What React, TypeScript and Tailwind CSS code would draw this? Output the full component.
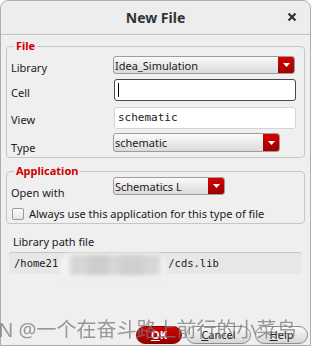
import React from "react";

const sans = { fontFamily: '"Noto Sans", "Open Sans", sans-serif' };

function Combo({ text, w }: { text: string; w: string }) {
  return (
    <div
      className={`${w} h-full flex items-stretch rounded-[3px] border border-[#9c9c9c] bg-gradient-to-b from-[#fbfbfb] to-[#dadada] overflow-hidden`}
    >
      <div className="flex-1 flex items-center pl-[1px] text-[11px] text-[#202020] leading-none">{text}</div>
      <div className="w-[16px] flex items-center justify-center bg-gradient-to-b from-[#d80000] to-[#9c0000]">
        <svg width="7" height="4" viewBox="0 0 7 4">
          <path d="M0 0 L7 0 L3.5 4 Z" fill="#ffffff" />
        </svg>
      </div>
    </div>
  );
}

export default function App() {
  return (
    <div className="w-[312px] h-[348px] bg-white relative overflow-hidden" style={sans}>
      <div className="w-[311px] h-[346px] flex flex-col rounded-t-[8px] border border-[#adadad] bg-[#efefef]">
        {/* Title bar */}
        <div className="h-[34px] shrink-0 border-b border-[#c2c2c2] flex items-center justify-center relative rounded-t-[8px] bg-[#ededed]">
          <span className="text-[14px] font-bold text-[#2e3436] mt-[-1px]">New File</span>
          <span className="absolute right-[13px] top-[11px]">
            <svg width="10" height="10" viewBox="0 0 10 10">
              <path d="M1.5 1.5 L8.5 8.5 M8.5 1.5 L1.5 8.5" stroke="#2e3436" strokeWidth="2.2" />
            </svg>
          </span>
        </div>

        {/* File group */}
        <fieldset className="mx-[5px] mt-[5px] border border-[#c6c6c6] rounded-[4px] px-[4px] pb-[5px] pt-0 min-w-0">
          <legend className="ml-[3px] px-[2px] text-[11px] leading-[12px] font-bold text-[#d00000]">File</legend>
          <div className="flex items-center h-[18px] mt-[4px]">
            <div className="w-[102px] text-[11px] text-[#202020] pt-[6px]">Library</div>
            <Combo text="Idea_Simulation" w="w-[182px]" />
          </div>
          <div className="flex items-center h-[22px] mt-[5px]">
            <div className="w-[103px] text-[11px] text-[#202020] pt-[7px]">Cell</div>
            <div className="w-[182px] h-full rounded-[3px] border border-[#4a4a4a] bg-white flex items-center pl-[3px]">
              <div className="w-[1px] h-[14px] bg-black" />
            </div>
          </div>
          <div className="flex items-center h-[22px] mt-[6px]">
            <div className="w-[103px] text-[11px] text-[#202020] pt-[4px]">View</div>
            <div
              className="w-[182px] h-full rounded-[3px] border border-[#d4d4d4] bg-white flex items-center pl-[3px] text-[11px] text-[#202020]"
              style={{ fontFamily: '"DejaVu Sans Mono", monospace' }}
            >
              schematic
            </div>
          </div>
          <div className="flex items-center h-[19px] mt-[4px]">
            <div className="w-[102px] text-[11px] text-[#202020] pt-[12px]">Type</div>
            <Combo text="schematic" w="w-[167px]" />
          </div>
        </fieldset>

        {/* Application group */}
        <fieldset className="mx-[5px] mt-[7px] border border-[#c6c6c6] rounded-[4px] px-[4px] pb-[3px] pt-0 min-w-0">
          <legend className="ml-[3px] px-[2px] text-[11px] leading-[12px] font-bold text-[#d00000]">Application</legend>
          <div className="flex items-center h-[18px]">
            <div className="w-[102px] text-[11px] text-[#202020] pt-[14px]">Open with</div>
            <Combo text="Schematics L" w="w-[112px]" />
          </div>
          <div className="flex items-center h-[12px] mt-[13px]">
            <div className="ml-[1px] w-[12px] h-[12px] rounded-[2px] border border-[#9a9a9a] bg-gradient-to-b from-[#fdfdfd] to-[#e4e4e4]" />
            <span className="ml-[5px] text-[11px] text-[#202020] whitespace-nowrap">
              Always use this application for this type of file
            </span>
          </div>
        </fieldset>

        {/* Library path */}
        <div className="ml-[12px] mt-[10px] h-[16px] text-[11px] leading-[16px] text-[#202020]">Library path file</div>
        <div
          className="mx-[8px] mt-[2px] h-[22px] rounded-[3px] border-t border-[#c4c4c4] bg-[#e7e7e7] flex items-center pl-[5px] text-[10.5px] text-[#202020] whitespace-nowrap"
          style={{ fontFamily: '"DejaVu Sans Mono", monospace' }}
        >
          <span>/home21</span>
          <span className="relative inline-block w-[110px] h-[20px]">
            <span className="absolute left-[1px] top-[-1px] w-[108px] h-[26px] rounded-full bg-[#f2f2f2] blur-[2px]" />
            <span className="absolute left-[12px] top-[1px] w-[90px] h-[20px] bg-[#d6d6d6] blur-[2px]" />
            <span className="absolute left-[30px] top-[2px] w-[20px] h-[18px] bg-[#cdcdcd] blur-[2px]" />
            <span className="absolute left-[62px] top-[2px] w-[24px] h-[18px] bg-[#d0d0d0] blur-[2px]" />
          </span>
          <span>/cds.lib</span>
        </div>

        {/* Buttons */}
        <div className="mt-auto mb-[1px] flex justify-end gap-[4px] pr-[2px]">
          <div className="w-[46px] h-[18px] rounded-full bg-gradient-to-b from-[#d40000] to-[#9a0000] border border-[#8a0000] flex items-center justify-center text-[11px] font-bold text-white">
            <span><span className="underline">O</span>K</span>
          </div>
          <div className="w-[65px] h-[18px] rounded-full bg-gradient-to-b from-[#fafafa] to-[#d6d6d6] border border-[#8e8e8e] flex items-center justify-center text-[11px] text-[#202020]">
            <span><span className="underline">C</span>ancel</span>
          </div>
          <div className="w-[53px] h-[18px] rounded-full bg-gradient-to-b from-[#fafafa] to-[#d6d6d6] border border-[#8e8e8e] flex items-center justify-center text-[11px] text-[#202020]">
            <span><span className="underline">H</span>elp</span>
          </div>
        </div>
      </div>

      {/* Watermark overlay */}
      <div
        className="absolute left-[-40px] top-[316px] text-[20px] leading-[28px] text-[#7a7a7a] opacity-75 whitespace-nowrap pointer-events-none"
        style={{ fontFamily: '"Noto Sans", "Noto Sans CJK SC", sans-serif' }}
      >
        CSDN @一个在奋斗路上前行的小菜鸟
      </div>
    </div>
  );
}
